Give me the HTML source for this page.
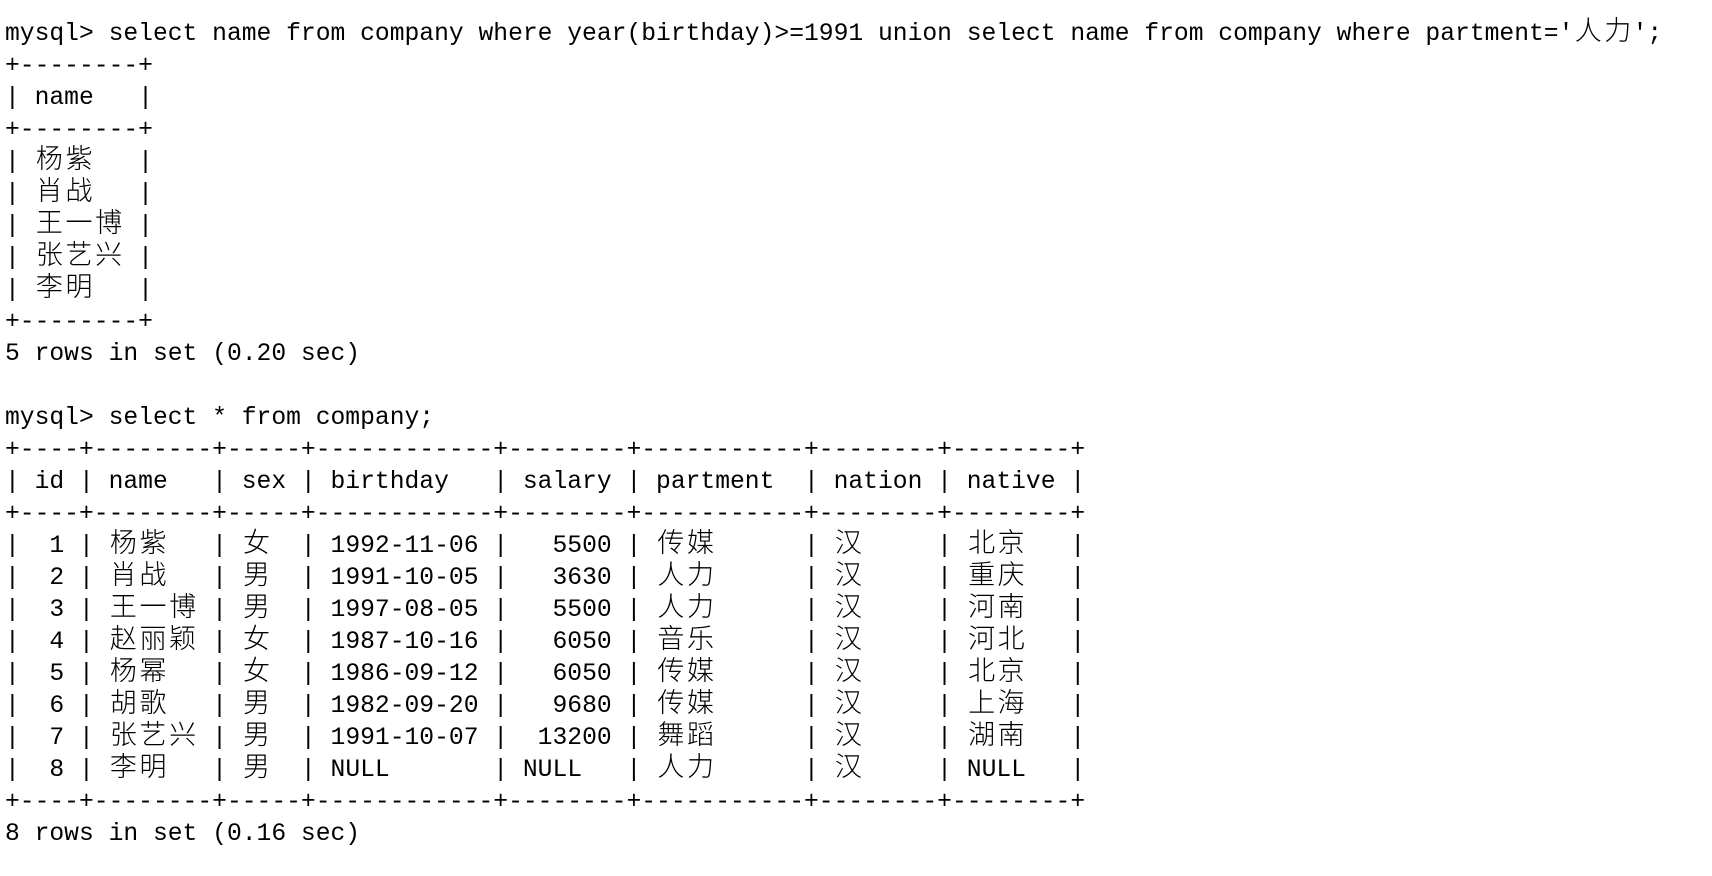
<!DOCTYPE html>
<html><head><meta charset="utf-8"><style>
html,body{margin:0;padding:0;background:#fff;width:1712px;height:876px;overflow:hidden}
pre{margin:0;position:absolute;left:5px;top:18px;font-family:"Liberation Mono","DejaVu Sans Mono",monospace;font-size:24.67px;line-height:32px;color:#000;white-space:pre}
i{font-style:normal;display:inline-block;width:29.6px;font-family:"Noto Sans CJK SC","WenQuanYi Zen Hei",sans-serif;font-weight:300;font-size:27px;line-height:20px;text-align:center;vertical-align:baseline}
</style></head><body>
<pre>mysql&gt; select name from company where year(birthday)&gt;=1991 union select name from company where partment='<i>人</i><i>力</i>';
+--------+
| name   |
+--------+
| <i>杨</i><i>紫</i>   |
| <i>肖</i><i>战</i>   |
| <i>王</i><i>一</i><i>博</i> |
| <i>张</i><i>艺</i><i>兴</i> |
| <i>李</i><i>明</i>   |
+--------+
5 rows in set (0.20 sec)

mysql&gt; select * from company;
+----+--------+-----+------------+--------+-----------+--------+--------+
| id | name   | sex | birthday   | salary | partment  | nation | native |
+----+--------+-----+------------+--------+-----------+--------+--------+
|  1 | <i>杨</i><i>紫</i>   | <i>女</i>  | 1992-11-06 |   5500 | <i>传</i><i>媒</i>      | <i>汉</i>     | <i>北</i><i>京</i>   |
|  2 | <i>肖</i><i>战</i>   | <i>男</i>  | 1991-10-05 |   3630 | <i>人</i><i>力</i>      | <i>汉</i>     | <i>重</i><i>庆</i>   |
|  3 | <i>王</i><i>一</i><i>博</i> | <i>男</i>  | 1997-08-05 |   5500 | <i>人</i><i>力</i>      | <i>汉</i>     | <i>河</i><i>南</i>   |
|  4 | <i>赵</i><i>丽</i><i>颖</i> | <i>女</i>  | 1987-10-16 |   6050 | <i>音</i><i>乐</i>      | <i>汉</i>     | <i>河</i><i>北</i>   |
|  5 | <i>杨</i><i>幂</i>   | <i>女</i>  | 1986-09-12 |   6050 | <i>传</i><i>媒</i>      | <i>汉</i>     | <i>北</i><i>京</i>   |
|  6 | <i>胡</i><i>歌</i>   | <i>男</i>  | 1982-09-20 |   9680 | <i>传</i><i>媒</i>      | <i>汉</i>     | <i>上</i><i>海</i>   |
|  7 | <i>张</i><i>艺</i><i>兴</i> | <i>男</i>  | 1991-10-07 |  13200 | <i>舞</i><i>蹈</i>      | <i>汉</i>     | <i>湖</i><i>南</i>   |
|  8 | <i>李</i><i>明</i>   | <i>男</i>  | NULL       | NULL   | <i>人</i><i>力</i>      | <i>汉</i>     | NULL   |
+----+--------+-----+------------+--------+-----------+--------+--------+
8 rows in set (0.16 sec)</pre>
</body></html>
